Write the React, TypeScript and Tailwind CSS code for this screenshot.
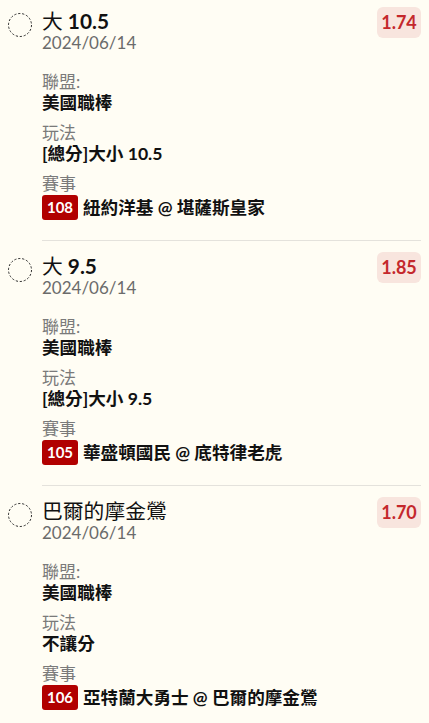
const bets = [
  {
    title: "大 10.5",
    date: "2024/06/14",
    odds: "1.74",
    league: "美國職棒",
    play: "[總分]大小 10.5",
    no: "108",
    game: "紐約洋基 @ 堪薩斯皇家",
  },
  {
    title: "大 9.5",
    date: "2024/06/14",
    odds: "1.85",
    league: "美國職棒",
    play: "[總分]大小 9.5",
    no: "105",
    game: "華盛頓國民 @ 底特律老虎",
  },
  {
    title: "巴爾的摩金鶯",
    date: "2024/06/14",
    odds: "1.70",
    league: "美國職棒",
    play: "不讓分",
    no: "106",
    game: "亞特蘭大勇士 @ 巴爾的摩金鶯",
  },
];

// CJK glyphs in the title stay regular, numbers are bold
function Title({ text }: { text: string }) {
  const parts = text.split(/([\u3000-\u9fff\uff00-\uffef]+)/).filter(Boolean);
  return (
    <div className="mt-[2px] text-[20.8px] leading-6">
      {parts.map((p, i) =>
        /[\u3000-\u9fff]/.test(p) ? (
          <span key={i} className="font-normal">{p}</span>
        ) : (
          <span key={i} className="font-bold">{p}</span>
        )
      )}
    </div>
  );
}

function DashedCircle() {
  return (
    <svg width="24" height="24" viewBox="0 0 24 24" className="mt-[6px] shrink-0">
      <circle cx="12" cy="12" r="11.5" fill="none" stroke="#2e2e2e" strokeWidth="1" strokeDasharray="2.2 1.8" />
    </svg>
  );
}

export default function App() {
  return (
    <div className="min-h-[723px] w-full bg-[#fffdf4] px-2 font-['Lato','Noto_Sans_CJK_TC',sans-serif] text-[#111]">
      {bets.map((bet, i) => (
        <div key={i} className={`flex gap-[10px] ${i === 0 ? "pt-[7px]" : "pt-[11px]"}`}>
          <DashedCircle />
          <div className="flex-1 border-b border-[#e4e2dc] pb-5">
            {/* header: title, date, odds */}
            <div className="flex items-start justify-between">
              <div>
                <Title text={bet.title} />
                <div className="text-[17px] leading-5 text-[#6b6b6b]">{bet.date}</div>
              </div>
              <div className="flex h-[31px] w-[44px] items-center justify-center rounded-md bg-[#f8e5de] text-[18px] font-bold text-[#c4282c]">
                {bet.odds}
              </div>
            </div>

            <div className="mt-[19px] flex flex-col gap-[8px]">
              <div>
                <div className="text-[17px] leading-[19px] text-[#7a7a7a]">聯盟:</div>
                <div className="text-[17.6px] font-bold leading-6">{bet.league}</div>
              </div>
              <div>
                <div className="text-[17px] leading-[19px] text-[#7a7a7a]">玩法</div>
                <div className="text-[17.6px] font-bold leading-6">{bet.play}</div>
              </div>
              <div>
                <div className="text-[17px] leading-[19px] text-[#7a7a7a]">賽事</div>
                <div className="mt-[2px] flex items-center gap-[5px]">
                  <span className="flex h-[25px] w-[36px] items-center justify-center rounded-[3px] bg-[#b10000] text-[15px] font-bold text-white">
                    {bet.no}
                  </span>
                  <span className="text-[17.6px] font-bold leading-6">{bet.game}</span>
                </div>
              </div>
            </div>
          </div>
        </div>
      ))}
    </div>
  );
}
